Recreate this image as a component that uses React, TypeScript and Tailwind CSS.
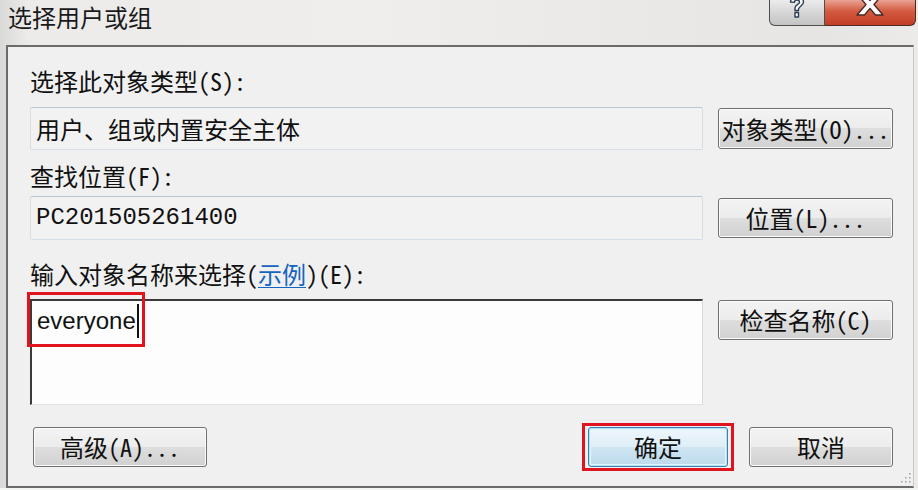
import type { ButtonHTMLAttributes, ReactNode } from 'react';

const cjk = '[font-family:"Noto_Sans_Mono_CJK_SC","Noto_Sans_CJK_SC",sans-serif]';

function WinButton({
  primary = false,
  className = '',
  children,
  ...props
}: ButtonHTMLAttributes<HTMLButtonElement> & { primary?: boolean; children: ReactNode }) {
  const base =
    'flex h-[40px] items-center justify-center whitespace-nowrap rounded-[3px] border text-[24px] leading-none text-[#111]';
  const look = primary
    ? 'border-[#3c7fb1] bg-[linear-gradient(#eef6fb_0%,#dfeef7_50%,#cfe5f2_50%,#bddaeb_100%)] shadow-[inset_0_0_0_1px_#aee3f6,inset_0_0_0_2px_#e4f4fb]'
    : 'border-[#707070] bg-[linear-gradient(#f3f3f3_0%,#ececec_50%,#dedede_50%,#d1d1d1_100%)] shadow-[inset_0_0_0_1px_#fbfbfb]';
  return (
    <button type="button" {...props} className={`${base} ${look} ${className}`}>
      {children}
    </button>
  );
}

function ReadOnlyField({ children, mono = false }: { children: ReactNode; mono?: boolean }) {
  return (
    <div
      className={`flex w-[673px] items-center rounded-[2px] border border-[#d5dde6] border-t-[#b9c6d3] bg-[#f2f2f2] pl-[5px] text-[24px] text-[#111] ${
        mono ? '[font-family:"Liberation_Mono",monospace] text-[20px]' : ''
      }`}
    >
      {children}
    </div>
  );
}

function Label({ children, className = '' }: { children: ReactNode; className?: string }) {
  return <div className={`h-[32px] text-[24px] leading-[32px] text-[#111] ${className}`}>{children}</div>;
}

export default function App() {
  return (
    <div className={`relative h-[490px] w-[918px] overflow-hidden bg-[linear-gradient(90deg,#d9d9d8,#ecebea_3%,#efeeec_40%,#e6e5e3_90%,#ecebea)] ${cjk}`}>
      {/* title bar */}
      <div className="flex h-[45px] items-start">
        <div className="pl-[8px] pt-[1px] text-[24px] leading-[32px] text-[#1a1a1a]">选择用户或组</div>
        <div className="ml-auto mr-[2px] flex">
          <div className="flex h-[26px] w-[56px] items-start justify-center overflow-hidden rounded-bl-[6px] border border-t-0 border-[#4d4d4d] bg-[linear-gradient(#ececec,#d4d4d4_55%,#c4c4c4)]">
            <svg width="18" height="24" viewBox="0 0 18 24" className="-mt-[5px]">
              <path
                d="M2.5 7 C2.5 1 15.5 1 15.5 7 C15.5 10.5 11 11.5 10.5 14 L10.5 15.5 L7 15.5 L7 13 C7 9.5 11.5 9.5 11.5 7.2 C11.5 4.3 6.5 4.3 6.5 7.2 Z M7 17.5 L10.5 17.5 L10.5 22 L7 22 Z"
                fill="#fff"
                stroke="#2c3e55"
                strokeWidth="1.4"
                strokeLinejoin="round"
              />
            </svg>
          </div>
          <div className="flex h-[26px] w-[91px] items-start justify-center overflow-hidden rounded-br-[6px] border border-l-0 border-t-0 border-[#4d2b24] bg-[linear-gradient(#e9a393,#d45a40_45%,#c23d26)]">
            <svg width="30" height="24" viewBox="0 0 30 24" className="-mt-[7px]">
              <path
                d="M2 1 L9.5 1 L15 7.5 L20.5 1 L28 1 L19 11.5 L28 22 L20.5 22 L15 15.5 L9.5 22 L2 22 L11 11.5 Z"
                fill="#fff"
                stroke="#4a2a24"
                strokeWidth="1.4"
                strokeLinejoin="round"
              />
            </svg>
          </div>
        </div>
      </div>

      {/* dialog body */}
      <div className="relative ml-[6px] h-[443px] w-[908px] border-b-2 border-l-2 border-r border-t-2 border-[#6b6b6b] border-r-[#c9c9c9] bg-[#f0f0f0] pl-[22px] pr-[20px]">
        <Label className="mt-[18px]">选择此对象类型(S):</Label>
        <div className="mt-[10px] flex h-[43px] gap-[15px]">
          <ReadOnlyField>用户、组或内置安全主体</ReadOnlyField>
          <WinButton className="mt-[1px] h-[41px] w-[175px]">对象类型(O)...</WinButton>
        </div>

        <Label className="mt-[10px]">查找位置(F):</Label>
        <div className="mt-[4px] flex h-[44px] gap-[15px]">
          <ReadOnlyField mono>PC201505261400</ReadOnlyField>
          <WinButton className="mt-[2px] w-[175px]">位置(L)...</WinButton>
        </div>

        <Label className="mt-[18px]">
          输入对象名称来选择(<span className="text-[#1565c0] underline decoration-1 underline-offset-[3px]">示例</span>)(E):
        </Label>
        <div className="mt-[9px] flex gap-[15px]">
          <div className="relative h-[106px] w-[673px] border-l-2 border-t-2 border-[#3a3a3a] border-b border-r border-b-[#e2e2e2] border-r-[#d8d8d8] bg-[#fdfdfd]">
            <div className="flex items-center pl-[5px] pt-[3px] text-[24px] leading-[30px] text-[#111] [font-family:'Liberation_Sans',sans-serif]">
              everyone
              <span className="ml-[1px] inline-block h-[34px] w-[2px] bg-[#111]" />
            </div>
            {/* red highlight around the typed name */}
            <div className="absolute -left-[5px] -top-[9px] h-[55px] w-[118px] border-[3px] border-[#e0141e]" />
          </div>
          <WinButton className="mt-[1px] w-[175px]">检查名称(C)</WinButton>
        </div>

        <div className="mt-[18px] flex h-[48px] items-center">
          <WinButton className="ml-[3px] w-[174px]">高级(A)...</WinButton>
          <div className="ml-auto border-[3px] border-[#e0141e] px-[3px] py-[1px]">
            <WinButton primary className="w-[140px]">
              确定
            </WinButton>
          </div>
          <WinButton className="ml-[15px] w-[144px]">取消</WinButton>
        </div>

        {/* size grip */}
        <svg width="10" height="10" viewBox="0 0 10 10" className="absolute bottom-[3px] right-[2px]">
          <rect x="8" y="0" width="1.5" height="1.5" fill="#a0a0a0" />
          <rect x="8" y="4" width="1.5" height="1.5" fill="#a0a0a0" />
          <rect x="4" y="4" width="1.5" height="1.5" fill="#a0a0a0" />
          <rect x="8" y="8" width="1.5" height="1.5" fill="#a0a0a0" />
          <rect x="4" y="8" width="1.5" height="1.5" fill="#a0a0a0" />
          <rect x="0" y="8" width="1.5" height="1.5" fill="#a0a0a0" />
        </svg>
      </div>
      <div className="h-[4px] bg-[#f3f6f3]" />
    </div>
  );
}
